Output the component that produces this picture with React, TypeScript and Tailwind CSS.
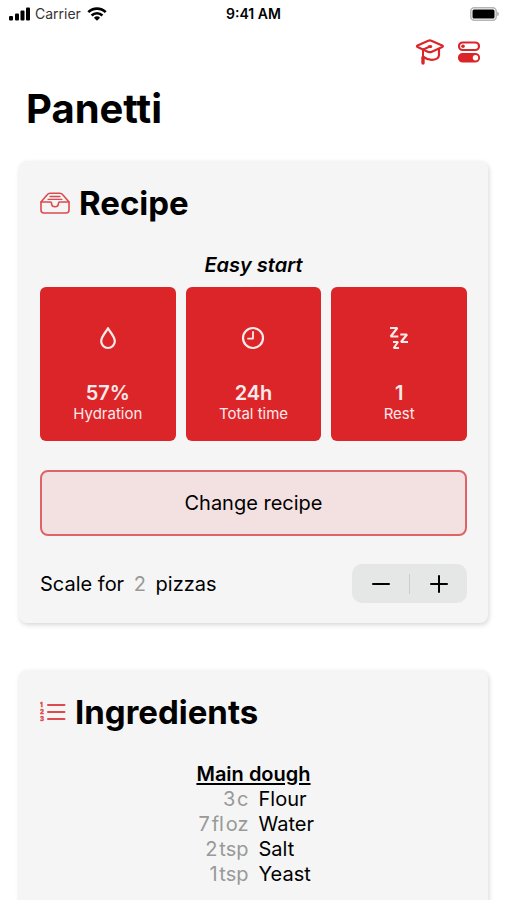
import React, { useState } from 'react';

const tiles = [
  { label: 'Hydration', value: '57%', icon: <DropIcon /> },
  { label: 'Total time', value: '24h', icon: <ClockIcon /> },
  { label: 'Rest', value: '1', icon: <SleepIcon /> },
];

const ingredients = [
  { name: 'Flour', amount: '3', unit: 'c' },
  { name: 'Water', amount: '7', unit: 'fl\u200aoz' },
  { name: 'Salt', amount: '2', unit: 'tsp' },
  { name: 'Yeast', amount: '1', unit: 'tsp' },
];

function DropIcon() {
  return (
    <svg width="24" height="24" viewBox="0 0 24 24" fill="none" stroke="currentColor" strokeWidth="2.2" strokeLinejoin="round" aria-hidden="true">
      <path d="M12 2.200C10.400 5.600 5.200 10.400 5.200 15.200a6.800 6.800 0 0 0 13.600 0C18.800 10.400 13.600 5.600 12 2.200Z" />
    </svg>
  );
}

function ClockIcon() {
  return (
    <svg width="24" height="24" viewBox="0 0 24 24" fill="none" stroke="currentColor" strokeWidth="2.2" strokeLinecap="round" strokeLinejoin="round" aria-hidden="true">
      <circle cx="12" cy="12" r="10" />
      <path d="M12 6v6.600H7" strokeWidth="1.8" />
    </svg>
  );
}

function SleepIcon() {
  return (
    <svg width="24" height="26" viewBox="0 0 24 26" fill="none" stroke="currentColor" strokeWidth="2.2" strokeLinejoin="bevel" aria-hidden="true">
      <path d="M3 3h7.300L3.700 11.500H11.300" />
      <path d="M13.300 9.500h6.700L14 17H21" />
      <path d="M6 17h5L6.700 23h5.300" strokeWidth="2" />
    </svg>
  );
}

function GraduationIcon() {
  return (
    <svg width="30" height="28" viewBox="0 0 30 28" fill="none" stroke="currentColor" strokeWidth="2.2" strokeLinecap="round" strokeLinejoin="round" aria-hidden="true">
      <path d="M13.300 2.700 2.600 7.400c-.9.400-.9 1.200 0 1.600l10.700 4.900c1 .4 2 .4 3 0L27.200 9c.9-.4.9-1.200 0-1.600L16.300 2.700c-1-.4-2-.4-3 0Z" />
      <path d="M15.500 8.300 8 11.500v8" strokeWidth="2" />
      <path d="M14 8.600h2" strokeWidth="2.600" />
      <path d="M24 11v6c0 3.300-3.600 4.800-7.200 4.800-3.200 0-5.800-1-8.300-2.800" />
      <path d="M8 19.500v5.500" strokeWidth="3.400" />
    </svg>
  );
}

function SwitchesIcon() {
  return (
    <svg width="24" height="24" viewBox="0 0 24 24" fill="none" stroke="currentColor" strokeWidth="2.200" aria-hidden="true">
      <rect x="2" y="2.500" width="20" height="7.500" rx="3.750" />
      <circle cx="6" cy="6.250" r="1.800" fill="currentColor" stroke="none" />
      <rect x="2" y="14" width="20" height="7.500" rx="3.750" fill="currentColor" />
      <circle cx="18.500" cy="17.750" r="2.700" fill="white" stroke="none" />
    </svg>
  );
}

function TrayIcon() {
  return (
    <svg width="30" height="22" viewBox="0 0 30 22" fill="none" stroke="currentColor" strokeWidth="1.600" strokeLinecap="round" strokeLinejoin="round" aria-hidden="true">
      <path d="M1 10 7 3c1-1.300 1.800-1.800 3.200-1.800h9.600c1.400 0 2.200.5 3.200 1.800l6 7V18c0 2-1 3-3 3H4c-2 0-3-1-3-3Z" />
      <path d="M1 10h9.500c.7 0 1 .4 1 1 0 2.200 1.400 3.700 3.500 3.700s3.500-1.500 3.500-3.700c0-.6.300-1 1-1H29" />
      <path d="M10 4.500h10M8 7.300h14" strokeWidth="1.300" />
    </svg>
  );
}

function NumberedListIcon() {
  return (
    <svg width="26" height="22" viewBox="0 0 26 22" fill="currentColor" aria-hidden="true">
      <g className="font-black" fontSize="6" stroke="currentColor" strokeWidth="0.300">
        <text x="0" y="6">1</text>
        <text x="0" y="13">2</text>
        <text x="0" y="20">3</text>
      </g>
      <path d="M8 4h16.500M8 11h16.500M8 18h16.500" stroke="currentColor" strokeWidth="2" strokeLinecap="round" />
    </svg>
  );
}

function StatusBar() {
  return (
    <div className="grid grid-cols-3 items-center h-7 shrink-0 px-2 text-sm leading-5 text-black">
      <div className="flex items-center gap-1">
        <svg width="23" height="14" viewBox="0 0 23 14" fill="currentColor" aria-hidden="true">
          <rect x="1" y="9" width="4" height="4.500" rx="1" />
          <rect x="7" y="6.500" width="4" height="7" rx="1" />
          <rect x="12.500" y="3.500" width="4" height="10" rx="1" />
          <rect x="18" y="0.500" width="4" height="13" rx="1" />
        </svg>
        <span className="text-[#333]">Carrier</span>
        <svg className="ml-0.5" width="20" height="14" viewBox="0 0 20 14" fill="none" stroke="currentColor" strokeWidth="2.600" aria-hidden="true">
          <path d="M1.300 5.200a12.300 12.300 0 0 1 17.400 0" />
          <path d="M4.600 8.500a7.700 7.700 0 0 1 10.800 0" />
          <path d="M10 13.800 6.900 10.700a4.500 4.500 0 0 1 6.200 0Z" fill="currentColor" stroke="none" />
        </svg>
      </div>
      <span className="text-center font-semibold whitespace-nowrap">9:41 AM</span>
      <svg className="justify-self-end" width="30" height="14" viewBox="0 0 30 14" aria-hidden="true">
        <rect x="1.800" y="0.800" width="25.400" height="12.400" rx="3.500" fill="white" stroke="#b5b5b5" strokeWidth="1.500" />
        <rect x="3.500" y="2.500" width="22" height="9" rx="1.500" fill="black" />
        <path d="M28.300 4.800c2 .6 2 3.800 0 4.400Z" fill="#a5a5a5" />
      </svg>
    </div>
  );
}

const Card: React.FC<{ title: string; icon: React.ReactNode; children: React.ReactNode }> = ({ title, icon, children }) => (
  <section className="rounded-lg bg-[#f5f5f5] px-[21px] pt-[21px] pb-5 shadow-[1px_2px_5px_rgba(0,0,0,0.16)]">
    <div className="flex items-center gap-[9px]">
      <span className="text-[#dc4a4d]">{icon}</span>
      <h2 className="text-[33px] leading-[42px] font-bold">{title}</h2>
    </div>
    {children}
  </section>
);

const App: React.FC = () => {
  const [pizzas, setPizzas] = useState(2);

  return (
    <div className="flex flex-col h-screen overflow-y-auto [scrollbar-width:none] bg-white text-black font-['Inter',sans-serif]">
      <StatusBar />

      <header className="px-[26px]">
        <div className="flex justify-end items-center gap-3 h-12 text-[#db2529]">
          <button aria-label="Learn"><GraduationIcon /></button>
          <button aria-label="Settings"><SwitchesIcon /></button>
        </div>
        <h1 className="pt-2 text-[40px] leading-[50px] font-bold">Panetti</h1>
      </header>

      <main className="flex flex-col gap-[47px] px-[19px] pt-[27px] pb-12">
        <Card title="Recipe" icon={<TrayIcon />}>
          <p className="mt-[29px] text-center text-xl leading-6 font-semibold italic">Easy start</p>

          <div className="grid grid-cols-3 gap-[10px] mt-[10px]">
            {tiles.map(tile => (
              <div key={tile.label} className="flex flex-col items-center h-[154px] rounded-md bg-[#db2529] text-[#fdeaea]">
                <div className="flex items-center h-[102px]">{tile.icon}</div>
                <div className="-mt-2 text-xl leading-6 font-semibold">{tile.value}</div>
                <div className="text-[15px] leading-[18px]">{tile.label}</div>
              </div>
            ))}
          </div>

          <button className="mt-[29px] w-full h-[66px] rounded-lg border-2 border-[#dc6468] bg-[#f3e1e1] text-xl">
            Change recipe
          </button>

          <div className="flex items-center justify-between mt-[28px] text-xl">
            <p>
              Scale for <span className="mx-1 text-[#999]">{pizzas}</span> pizzas
            </p>
            <div className="flex items-center w-[115px] h-[39px] rounded-[10px] bg-[#e5e6e6]">
              <button aria-label="Fewer pizzas" className="flex flex-1 justify-center" onClick={() => setPizzas(Math.max(1, pizzas - 1))}>
                <svg width="18" height="18" viewBox="0 0 18 18" stroke="currentColor" strokeWidth="2" strokeLinecap="round"><path d="M1 9h16" /></svg>
              </button>
              <span className="w-px h-5 bg-[#ccc]" />
              <button aria-label="More pizzas" className="flex flex-1 justify-center" onClick={() => setPizzas(pizzas + 1)}>
                <svg width="18" height="18" viewBox="0 0 18 18" stroke="currentColor" strokeWidth="2" strokeLinecap="round"><path d="M1 9h16M9 1v16" /></svg>
              </button>
            </div>
          </div>
        </Card>

        <Card title="Ingredients" icon={<NumberedListIcon />}>
          <table className="mt-[29px] w-full table-fixed text-xl leading-[25px]">
            <caption className="font-semibold underline underline-offset-2 decoration-2">Main dough</caption>
            <tbody>
              {ingredients.map(item => (
                <tr key={item.name}>
                  <td className="pr-[5px] text-right text-[#999]">{item.amount}{'\u200a'}{item.unit}</td>
                  <td className="pl-[5px]">{item.name}</td>
                </tr>
              ))}
            </tbody>
          </table>
        </Card>
      </main>
    </div>
  );
};

export default App;
